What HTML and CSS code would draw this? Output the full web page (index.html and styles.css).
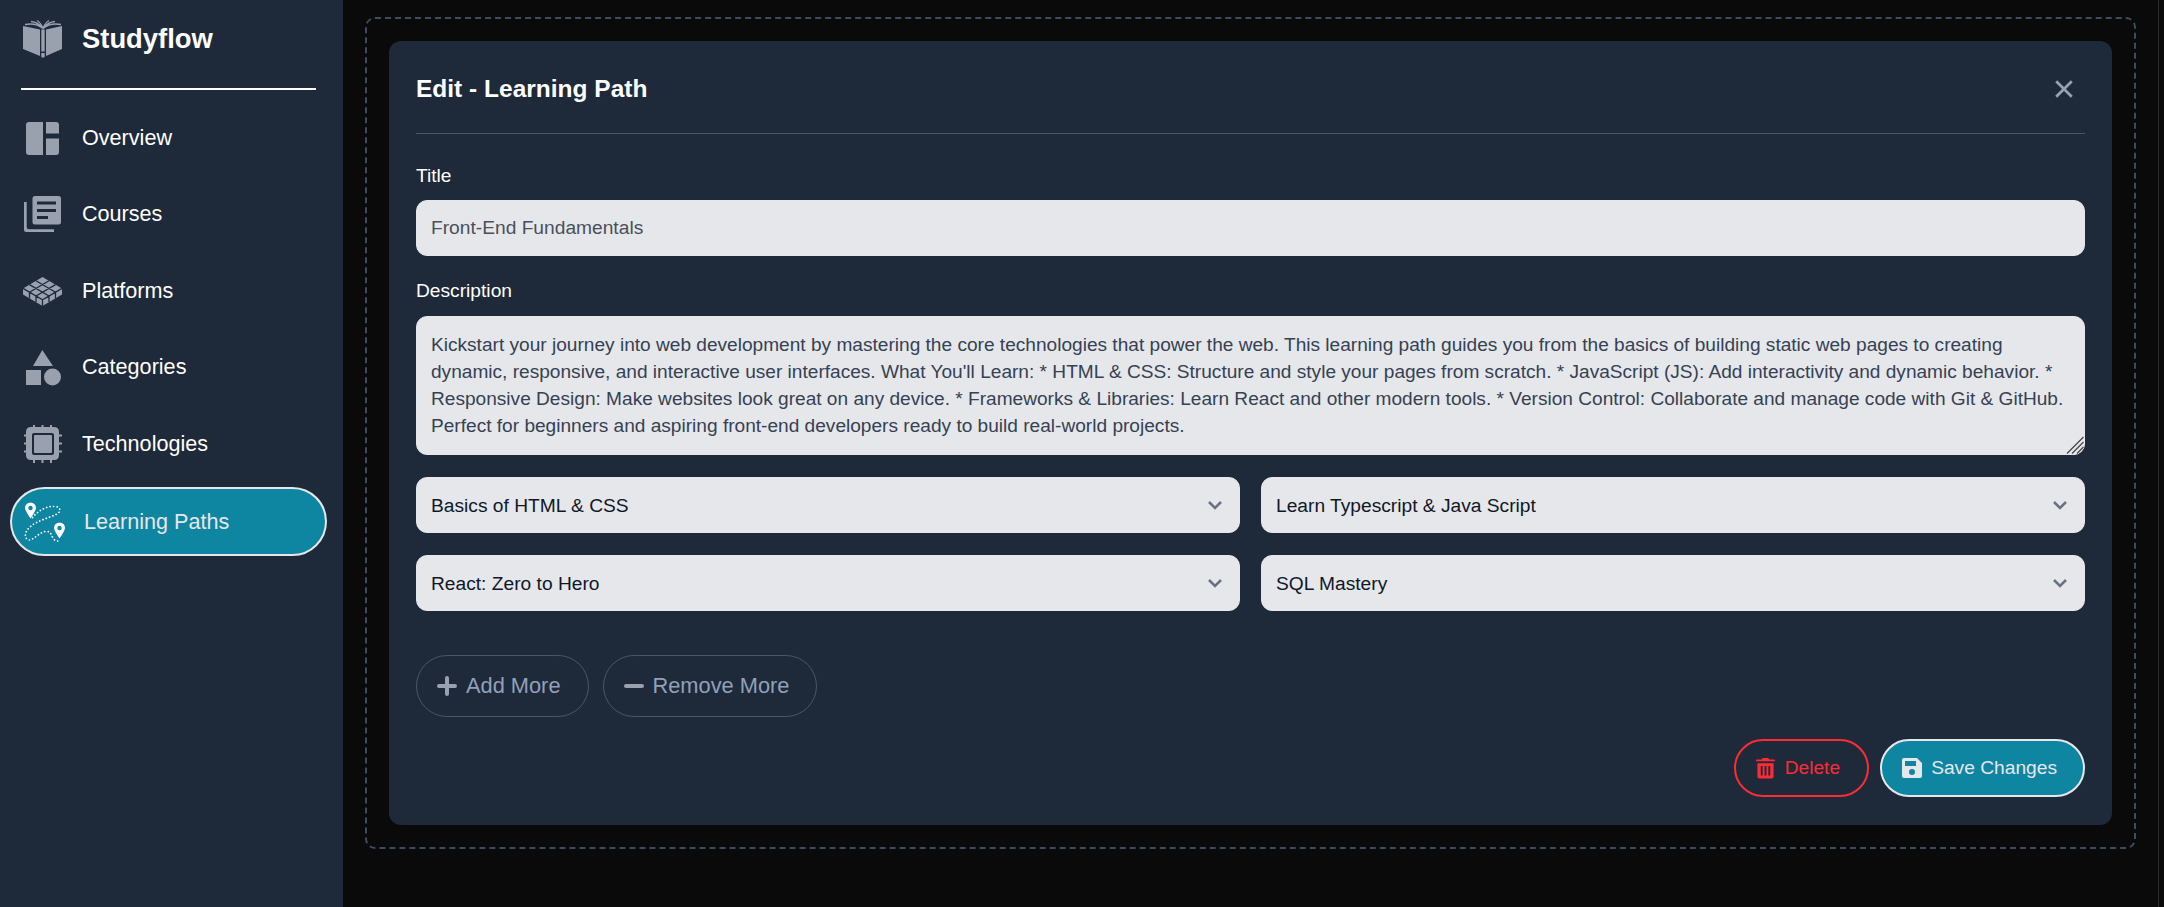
FILE: index.html
```html
<!DOCTYPE html>
<html>
<head>
    <meta charset="UTF-8">
    <title>Studyflow - Edit Learning Path</title>
    <link rel="stylesheet" href="styles.css">
</head>
<body>
    <div class="app">
        <!-- sidebar -->
        <aside class="sidebar">
            <div class="brand">
                <svg class="icon" viewBox="0 0 40 40">
                    <path d="M1 7 L18 10.500 V37 L1 30 Z"/>
                    <path d="M40 7 L24 10.500 V37 L40 30 Z"/>
                    <path d="M19.300 10.500 H22.700 V38 L21 38.700 L19.300 38 V34 H22.700 V32.500 H19.300 Z"/>
                    <path class="fan" d="M21 9.500 Q14 3.500 3 5.500 M21 9.500 Q16 3 9 2.500 M21 9.500 Q19 4 15 1.500 M21 9.500 Q28 3.500 39 5.500 M21 9.500 Q26 3 33 2.500 M21 9.500 Q23 4 27 1.500"/>
                </svg>
                <span class="brand-name">Studyflow</span>
            </div>
            <nav class="nav">
                <a class="nav-item">
                    <svg class="icon" viewBox="0 0 40 40">
                        <path d="M7 4 H21 V37 H7 Q4 37 4 34 V7 Q4 4 7 4 Z"/>
                        <path d="M24 4 H34 Q37 4 37 7 V15.500 H24 Z"/>
                        <path d="M24 20.500 H37 V34 Q37 37 34 37 H24 Z"/>
                    </svg>
                    <span>Overview</span>
                </a>
                <a class="nav-item">
                    <svg class="icon" viewBox="0 0 40 40">
                        <path fill-rule="evenodd" d="M13 2 H36.500 Q39 2 39 4.500 V28 Q39 30.500 36.500 30.500 H13 Q10.500 30.500 10.500 28 V4.500 Q10.500 2 13 2 Z M15 7.500 V10.500 H34 V7.500 Z M15 15 V18 H34 V15 Z M15 22 V25 H26 V22 Z"/>
                        <path d="M2 8 H4.700 V33 Q4.700 35.300 7 35.300 H32 V38 H4.500 Q2 38 2 35.500 Z"/>
                    </svg>
                    <span>Courses</span>
                </a>
                <a class="nav-item">
                    <svg class="icon" viewBox="0 0 40 40">
                        <path d="M20.500 6 L40 17.400 V23.500 L20.500 35 L1 23.500 V17.400 Z"/>
                        <path class="cut" d="M27 9.800 L7.500 21.200 M33.500 13.600 L14 25 M14 9.800 L33.500 21.200 M7.500 13.600 L27 25 M1 17.400 L20.500 28.800 L40 17.400 M7.500 21.200 V27.500 M14 25 V31 M20.500 28.800 V35 M27 25 V31 M33.500 21.200 V27.500"/>
                    </svg>
                    <span>Platforms</span>
                </a>
                <a class="nav-item">
                    <svg class="icon" viewBox="0 0 40 40">
                        <path d="M20.300 3 L31 19 H11 Z"/>
                        <rect x="4" y="23" width="15" height="15"/>
                        <circle cx="30.500" cy="30" r="8.500"/>
                    </svg>
                    <span>Categories</span>
                </a>
                <a class="nav-item">
                    <svg class="icon" viewBox="0 0 40 40">
                        <path fill-rule="evenodd" d="M9 3 H32 Q37 3 37 8 V31 Q37 36 32 36 H9 Q4 36 4 31 V8 Q4 3 9 3 Z M12 9 Q10 9 10 11 V29 Q10 31 12 31 H30 Q32 31 32 29 V11 Q32 9 30 9 Z"/>
                        <rect x="12" y="11" width="18" height="18" rx="1"/>
                        <path d="M11 1 H13 V4 H11 Z M19.500 1 H21.500 V4 H19.500 Z M28 1 H30 V4 H28 Z M11 36 H13 V39 H11 Z M19.500 36 H21.500 V39 H19.500 Z M28 36 H30 V39 H28 Z M2 10.500 H5 V12.500 H2 Z M2 18.500 H5 V20.500 H2 Z M2 26.500 H5 V28.500 H2 Z M36 10.500 H40 V12.500 H36 Z M36 18.500 H40 V20.500 H36 Z M36 26.500 H40 V28.500 H36 Z"/>
                    </svg>
                    <span>Technologies</span>
                </a>
                <a class="nav-item active">
                    <svg class="icon" viewBox="0 0 40 40">
                        <path fill-rule="evenodd" d="M6.500 0.500 A5.500 5.500 0 0 1 12 6 Q12 8.500 6.500 16.500 Q1 8.500 1 6 A5.500 5.500 0 0 1 6.500 0.500 Z M6.500 3.800 A2.200 2.200 0 1 0 6.500 8.200 A2.200 2.200 0 1 0 6.500 3.800 Z"/>
                        <path fill-rule="evenodd" d="M35.500 20.500 A5.500 5.500 0 0 1 41 26 Q41 28.500 35.500 36.500 Q30 28.500 30 26 A5.500 5.500 0 0 1 35.500 20.500 Z M35.500 23.800 A2.200 2.200 0 1 0 35.500 28.200 A2.200 2.200 0 1 0 35.500 23.800 Z"/>
                        <path class="dots" d="M8.500 15.500 C14 9 22 4 30 4.500 C36 4 38 9 33 12 C25 16 12 19 6 25 C0 30 0 37 5 38 C10 38 15 30 22 29.500 C27 29 27 33 29 36 C31 39 33 39.500 34 39"/>
                    </svg>
                    <span>Learning Paths</span>
                </a>
            </nav>
        </aside>

        <!-- main -->
        <main class="main">
            <div class="drop-zone">
                <section class="modal">
                    <div class="modal-head">
                        <h2 class="modal-title">Edit - Learning Path</h2>
                        <svg class="close" viewBox="0 0 18 18">
                            <path d="M2 2 L16 16 M16 2 L2 16"/>
                        </svg>
                    </div>

                    <label class="label first">Title</label>
                    <input class="field title-input" type="text" value="Front-End Fundamentals">

                    <label class="label second">Description</label>
                    <div class="area-wrap">
                        <textarea class="field area">Kickstart your journey into web development by mastering the core technologies that power the web. This learning path guides you from the basics of building static web pages to creating
dynamic, responsive, and interactive user interfaces. What You'll Learn: * HTML &amp; CSS: Structure and style your pages from scratch. * JavaScript (JS): Add interactivity and dynamic behavior. *
Responsive Design: Make websites look great on any device. * Frameworks &amp; Libraries: Learn React and other modern tools. * Version Control: Collaborate and manage code with Git &amp; GitHub.
Perfect for beginners and aspiring front-end developers ready to build real-world projects.</textarea>
                        <svg class="grip" viewBox="0 0 18 18"><path d="M17.500 1 L1 17.500 M17.500 6 L6 17.500 M17.500 11 L11 17.500"/></svg>
                    </div>

                    <div class="course-grid">
                        <div class="pick">
                            <select class="field choice"><option>Basics of HTML &amp; CSS</option></select>
                            <svg class="chevron" viewBox="0 0 16 10"><path d="M2 2 L8 8 L14 2"/></svg>
                        </div>
                        <div class="pick">
                            <select class="field choice"><option>Learn Typescript &amp; Java Script</option></select>
                            <svg class="chevron" viewBox="0 0 16 10"><path d="M2 2 L8 8 L14 2"/></svg>
                        </div>
                        <div class="pick">
                            <select class="field choice"><option>React: Zero to Hero</option></select>
                            <svg class="chevron" viewBox="0 0 16 10"><path d="M2 2 L8 8 L14 2"/></svg>
                        </div>
                        <div class="pick">
                            <select class="field choice"><option>SQL Mastery</option></select>
                            <svg class="chevron" viewBox="0 0 16 10"><path d="M2 2 L8 8 L14 2"/></svg>
                        </div>
                    </div>

                    <div class="more-row">
                        <button class="more-btn">
                            <svg viewBox="0 0 20 20"><path d="M10 2 V18 M2 10 H18"/></svg>
                            Add More
                        </button>
                        <button class="more-btn">
                            <svg viewBox="0 0 20 20"><path d="M2 10 H18"/></svg>
                            Remove More
                        </button>
                    </div>

                    <div class="action-row">
                        <button class="action-btn delete">
                            <svg viewBox="0 0 20 22">
                                <path fill-rule="evenodd" d="M7 0.500 H13 L14 2 H19 Q20 2 20 3 V4 H0 V3 Q0 2 1 2 H6 Z M1.500 6 H18.500 V20 Q18.500 22 16.500 22 H3.500 Q1.500 22 1.500 20 Z M5 9 V19 H7 V9 Z M9 9 V19 H11 V9 Z M13 9 V19 H15 V9 Z"/>
                            </svg>
                            Delete
                        </button>
                        <button class="action-btn save">
                            <svg viewBox="0 0 20 20">
                                <path fill-rule="evenodd" d="M2 0 H15 L20 5 V18 Q20 20 18 20 H2 Q0 20 0 18 V2 Q0 0 2 0 Z M3 3 V8 H14 V3 Z M10 11 A3 3 0 1 0 10 17 A3 3 0 1 0 10 11 Z"/>
                            </svg>
                            Save Changes
                        </button>
                    </div>
                </section>
            </div>
        </main>
    </div>
</body>
</html>
```

FILE: styles.css
```css
* {
    margin: 0;
    padding: 0;
    box-sizing: border-box;
}
html, body {
    height: 100%;
    overflow: hidden;
}
body {
    background: #0a0a0a;
    font-family: "Liberation Sans", Arial, sans-serif;
    color: #fff;
}
.app {
    display: flex;
    height: 100%;
}

/* sidebar */
.sidebar {
    width: 343px;
    flex-shrink: 0;
    background: #1e2939;
    padding: 0 16px 0 10px;
}
.icon {
    width: 40px;
    height: 40px;
    flex-shrink: 0;
    fill: #99a1af;
    overflow: visible;
}
.brand {
    display: flex;
    align-items: center;
    gap: 20px;
    height: 90px;
    margin: 0 11px;
    padding: 0 1px 10px;
    border-bottom: 2px solid #fff;
}
.brand-name {
    font-size: 27.4px;
    font-weight: bold;
}
.nav {
    display: flex;
    flex-direction: column;
    gap: 11.4px;
    margin-top: 15.500px;
}
.nav-item {
    display: flex;
    align-items: center;
    gap: 20px;
    height: 65px;
    padding: 0 12px;
    font-size: 21.6px;
}
.nav-item.active {
    height: 69px;
    border: 2px solid #e5e7eb;
    border-radius: 35px;
    background: #0e85a1;
    color: #e5e7eb;
}
.nav-item.active .icon {
    fill: #fff;
}
.fan {
    fill: none;
    stroke: #99a1af;
    stroke-width: 1.300;
}
.cut {
    fill: none;
    stroke: #1e2939;
    stroke-width: 1.300;
}
.nav-item.active .icon .dots {
    fill: none;
    stroke: #fff;
    stroke-width: 1.700;
    stroke-linecap: round;
    stroke-dasharray: 0.100 3.400;
}

/* main */
.main {
    flex: 1;
    padding: 17px 22px 0;
    border-right: 1px solid #2c2c2c;
    margin-right: 5px;
}
.drop-zone {
    height: 832px;
    padding: 22px;
    border: 2px dashed #3f4b5e;
    border-radius: 10px;
}
.modal {
    height: 784px;
    padding: 0 27px;
    background: #1e2939;
    border-radius: 12px;
}
.modal-head {
    display: flex;
    align-items: center;
    justify-content: space-between;
    height: 93px;
    padding: 4px 11px 0 0;
    border-bottom: 1px solid #4a5565;
}
.modal-title {
    font-size: 24.5px;
    font-weight: bold;
}
.close {
    width: 20px;
    height: 20px;
}
.close path {
    fill: none;
    stroke: #99a1af;
    stroke-width: 2.500;
}
.label {
    display: block;
    font-size: 19.2px;
    line-height: 26px;
}
.label.first {
    margin-top: 29px;
    margin-bottom: 11px;
}
.label.second {
    margin-top: 22px;
    margin-bottom: 12px;
}
.field {
    display: block;
    width: 100%;
    height: 56px;
    padding: 0 14px;
    border: 1px solid #e5e7eb;
    border-radius: 11px;
    background: #e5e7eb;
    font-family: inherit;
    font-size: 19.2px;
    outline: none;
}
.title-input {
    color: #4b4f5a;
}
.area-wrap {
    position: relative;
}
.area {
    height: 139px;
    padding: 14px;
    color: #364153;
    font-size: 19.1px;
    line-height: 27px;
    white-space: pre;
    resize: none;
    overflow: hidden;
}
.grip {
    position: absolute;
    right: 1px;
    bottom: 1px;
    width: 18px;
    height: 18px;
    fill: none;
    stroke: #444;
    stroke-width: 1.200;
}
.course-grid {
    display: grid;
    grid-template-columns: 1fr 1fr;
    gap: 22px 21px;
    margin-top: 22px;
}
.pick {
    position: relative;
}
.choice {
    appearance: none;
    color: #101828;
}
.chevron {
    position: absolute;
    right: 17px;
    top: 23px;
    width: 16px;
    height: 10px;
    fill: none;
    stroke: #6a7282;
    stroke-width: 2.500;
}
.more-row {
    display: flex;
    gap: 14px;
    margin-top: 44px;
}
.more-btn {
    display: flex;
    align-items: center;
    gap: 9px;
    height: 62px;
    padding: 0 27px 0 20px;
    border: 1px solid #4a5565;
    border-radius: 31px;
    background: none;
    color: #90a1b9;
    font-family: inherit;
    font-size: 21.8px;
}
.more-btn svg {
    width: 20px;
    height: 20px;
    fill: none;
    stroke: #99a1af;
    stroke-width: 4;
    stroke-linecap: round;
}
.action-row {
    display: flex;
    justify-content: flex-end;
    gap: 11px;
    margin-top: 22px;
}
.action-btn {
    display: flex;
    align-items: center;
    gap: 10px;
    height: 58px;
    padding: 0 27px 0 20px;
    border-radius: 29px;
    font-family: inherit;
    font-size: 19.2px;
}
.action-btn.delete {
    border: 2px solid #fb2c36;
    background: none;
    color: #fb2c36;
}
.action-btn.delete svg {
    width: 19px;
    height: 22px;
    fill: #fb2c36;
}
.action-btn.save {
    gap: 9px;
    padding-right: 26px;
    border: 2px solid #e5e7eb;
    background: #0e85a1;
    color: #e5e7eb;
}
.action-btn.save svg {
    width: 20px;
    height: 20px;
    fill: #e5e7eb;
}
```
